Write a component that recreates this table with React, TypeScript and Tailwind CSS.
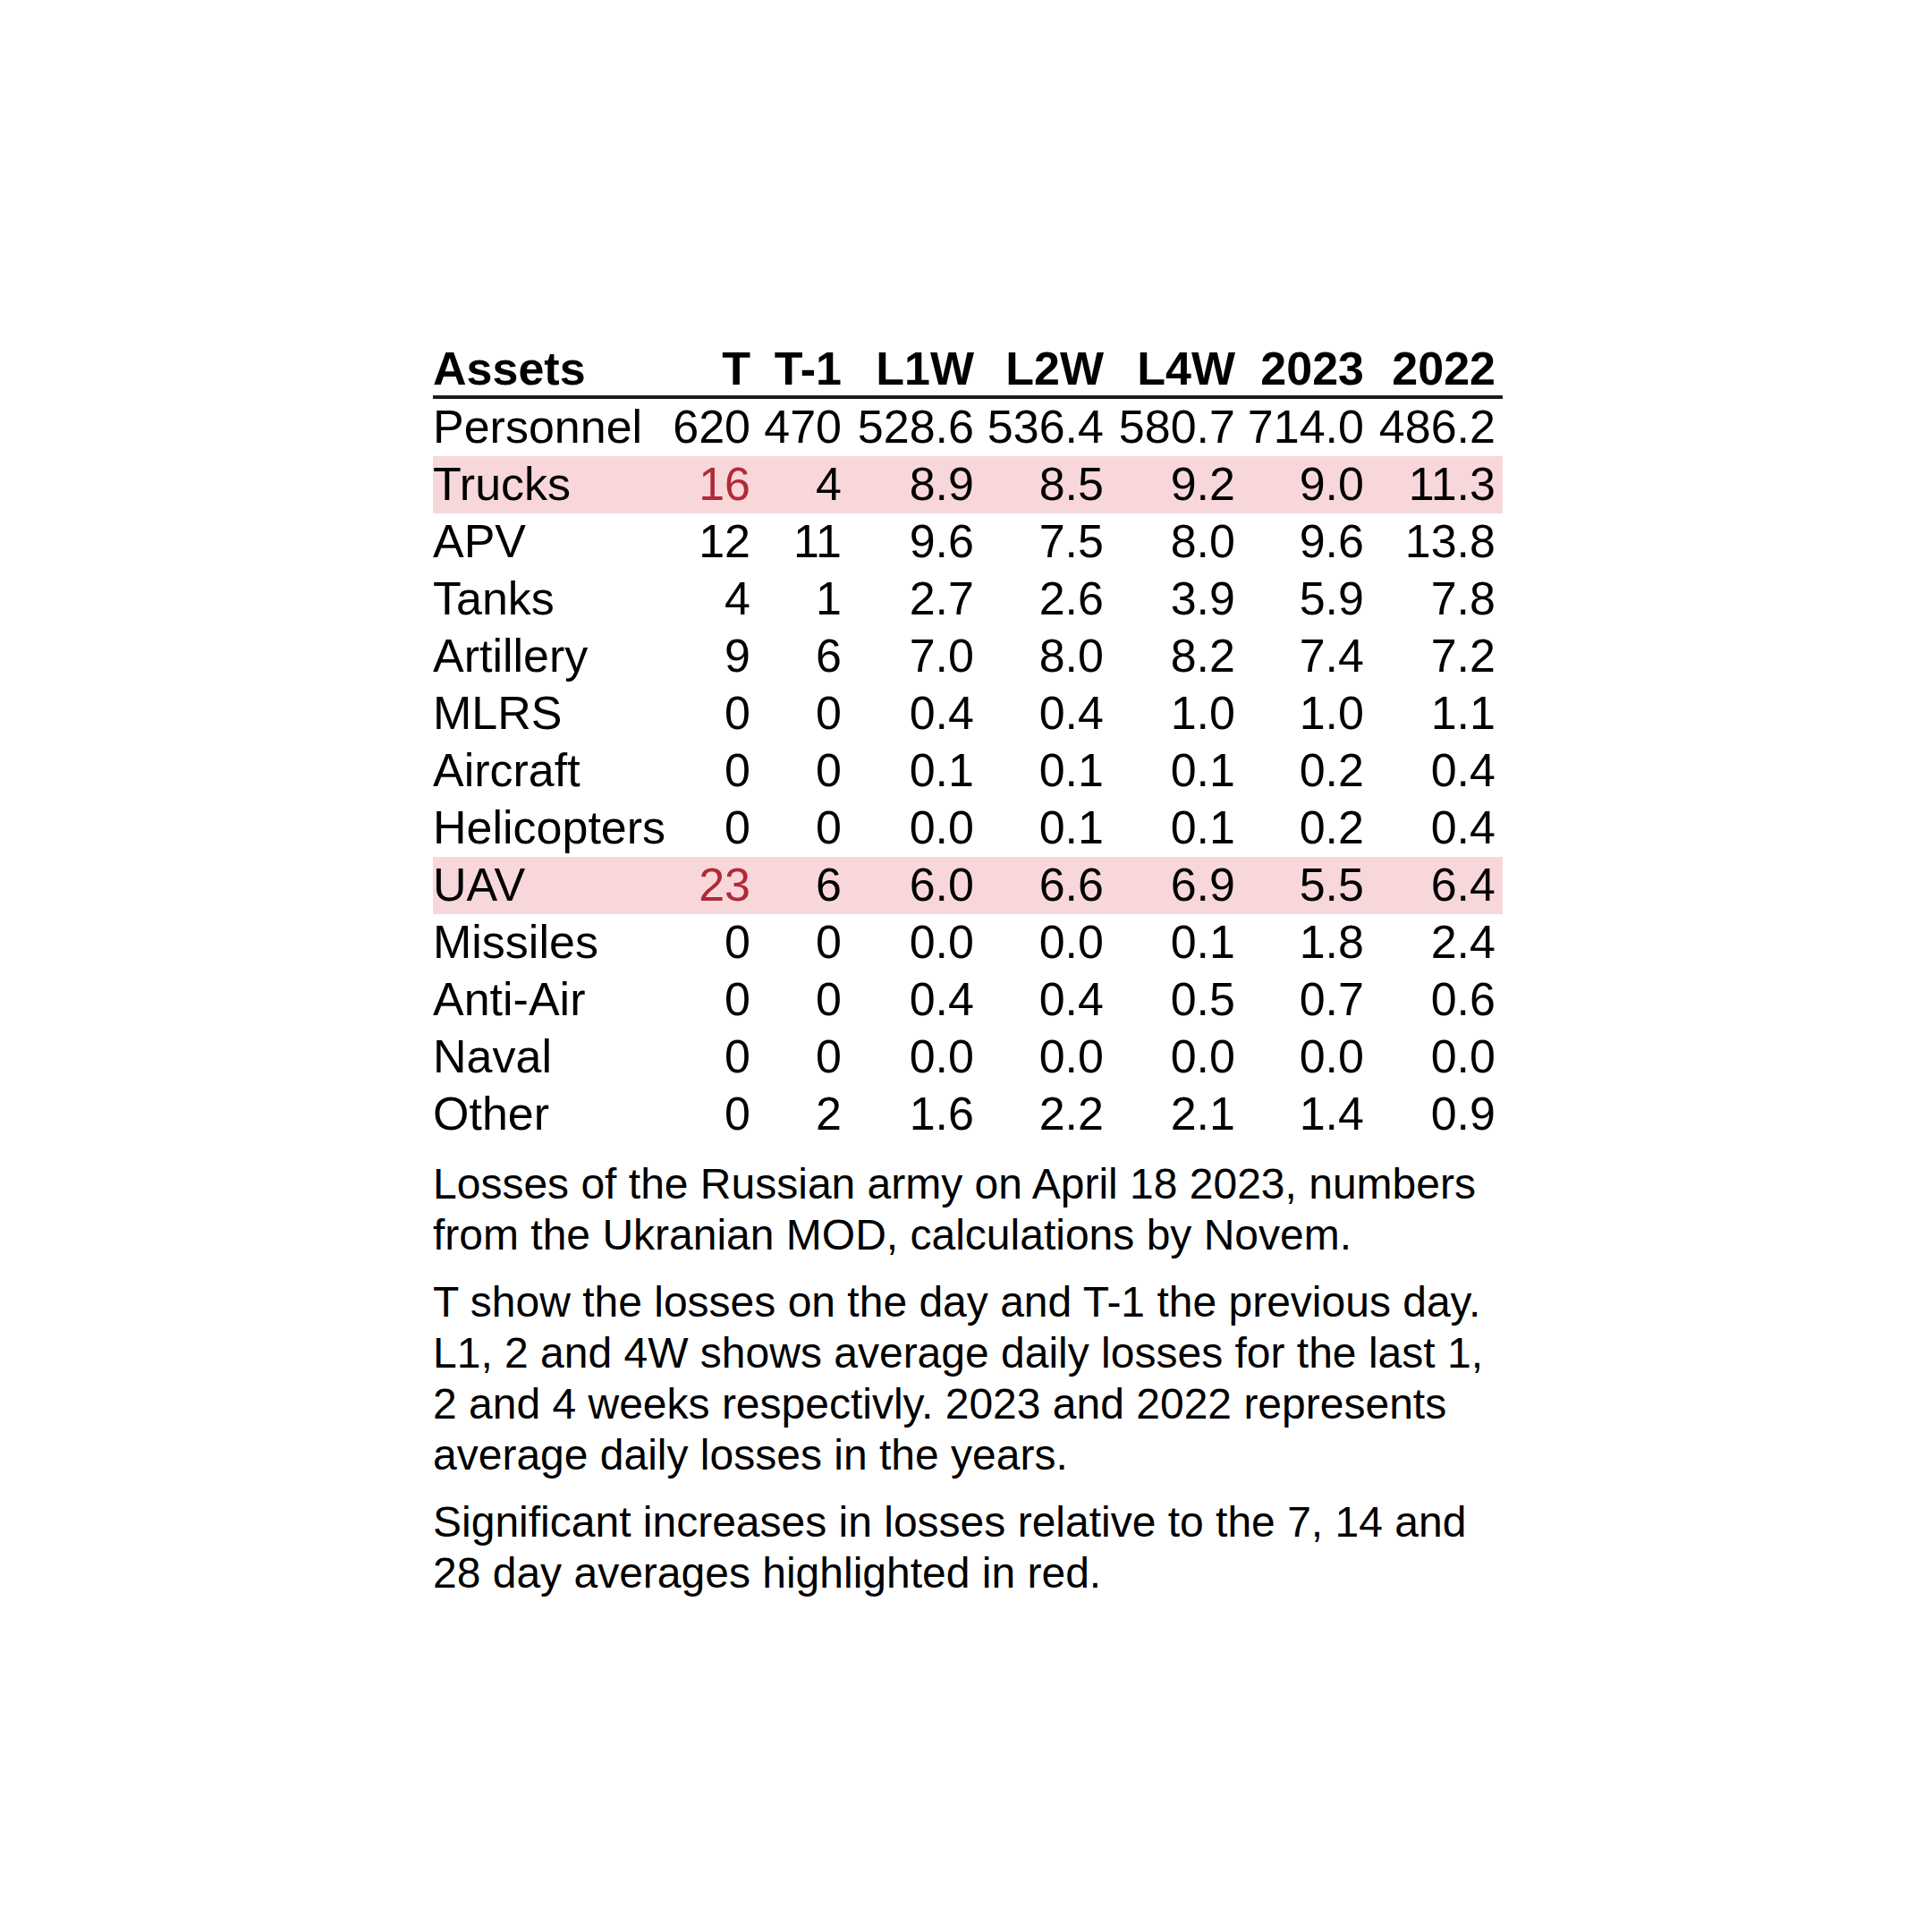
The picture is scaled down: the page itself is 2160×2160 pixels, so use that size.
const columns = ["T", "T-1", "L1W", "L2W", "L4W", "2023", "2022"];

type Row = {
  asset: string;
  values: string[];
  highlight?: boolean;
};

const rows: Row[] = [
  { asset: "Personnel", values: ["620", "470", "528.6", "536.4", "580.7", "714.0", "486.2"] },
  { asset: "Trucks", values: ["16", "4", "8.9", "8.5", "9.2", "9.0", "11.3"], highlight: true },
  { asset: "APV", values: ["12", "11", "9.6", "7.5", "8.0", "9.6", "13.8"] },
  { asset: "Tanks", values: ["4", "1", "2.7", "2.6", "3.9", "5.9", "7.8"] },
  { asset: "Artillery", values: ["9", "6", "7.0", "8.0", "8.2", "7.4", "7.2"] },
  { asset: "MLRS", values: ["0", "0", "0.4", "0.4", "1.0", "1.0", "1.1"] },
  { asset: "Aircraft", values: ["0", "0", "0.1", "0.1", "0.1", "0.2", "0.4"] },
  { asset: "Helicopters", values: ["0", "0", "0.0", "0.1", "0.1", "0.2", "0.4"] },
  { asset: "UAV", values: ["23", "6", "6.0", "6.6", "6.9", "5.5", "6.4"], highlight: true },
  { asset: "Missiles", values: ["0", "0", "0.0", "0.0", "0.1", "1.8", "2.4"] },
  { asset: "Anti-Air", values: ["0", "0", "0.4", "0.4", "0.5", "0.7", "0.6"] },
  { asset: "Naval", values: ["0", "0", "0.0", "0.0", "0.0", "0.0", "0.0"] },
  { asset: "Other", values: ["0", "2", "1.6", "2.2", "2.1", "1.4", "0.9"] },
];

const gridCols =
  "grid grid-cols-[265px_98px_102px_148px_145px_147px_144px_147px]";

export default function App() {
  return (
    <div className="w-[2160px] h-[2160px] bg-white pt-[382px] pl-[484px] font-['Liberation_Sans',Arial,sans-serif] text-black">
      <div className="w-[1196px]">
        {/* Table header */}
        <div className={`${gridCols} h-[64px] border-b-4 border-[#1c1c1c] text-[52px] leading-[60px] font-bold`}>
          <div className="text-left">Assets</div>
          {columns.map((col) => (
            <div key={col} className="text-right pr-2">
              {col}
            </div>
          ))}
        </div>

        {/* Table body */}
        {rows.map((row) => (
          <div
            key={row.asset}
            className={`${gridCols} h-[64px] text-[52px] leading-[62px] ${
              row.highlight ? "bg-[#f8d7da]" : ""
            }`}
          >
            <div className="text-left whitespace-nowrap">{row.asset}</div>
            {row.values.map((v, i) => (
              <div
                key={i}
                className={`text-right pr-2 ${
                  row.highlight && i === 0 ? "text-[#b02a37]" : ""
                }`}
              >
                {v}
              </div>
            ))}
          </div>
        ))}

        {/* Source notes */}
        <div className="pt-[17px] text-[48px] leading-[57px]">
          <p>
            Losses of the Russian army on April 18 2023, numbers from the
            Ukranian MOD, calculations by Novem.
          </p>
          <p className="mt-[18px]">
            T show the losses on the day and T-1 the previous day. L1, 2 and 4W
            shows average daily losses for the last 1, 2 and 4 weeks
            respectivly. 2023 and 2022 represents average daily losses in the
            years.
          </p>
          <p className="mt-[18px]">
            Significant increases in losses relative to the 7, 14 and 28 day
            averages highlighted in red.
          </p>
        </div>
      </div>
    </div>
  );
}
